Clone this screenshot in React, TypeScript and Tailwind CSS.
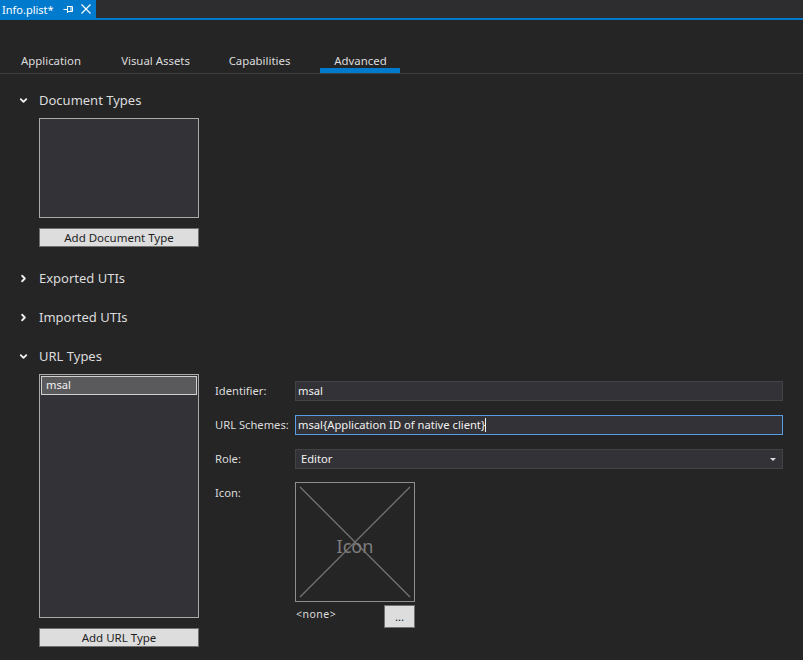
import { ChevronDown, ChevronRight } from 'lucide-react';

const font = "font-['Noto_Sans','Open_Sans',sans-serif]";

function SectionHeader({ title, open, className }: { title: string; open?: boolean; className?: string }) {
  return (
    <div className={`flex h-5 items-center ${className ?? ''}`}>
      <div className="flex w-[39px] justify-center pl-[7px] text-[#f1f1f1]">
        {open ? <ChevronDown size={11} strokeWidth={4} /> : <ChevronRight size={11} strokeWidth={4} />}
      </div>
      <span className="pt-[2px] text-[13px] text-[#dcdcdc]">{title}</span>
    </div>
  );
}

function AddButton({ label, className }: { label: string; className?: string }) {
  return (
    <button className={`flex h-[19px] w-40 items-center justify-center border border-[#707070] bg-[#dddddd] text-[11.5px] text-[#1e1e1e] ${className ?? ''}`}>
      {label}
    </button>
  );
}

function Field({ label, children, className }: { label: string; children: React.ReactNode; className?: string }) {
  return (
    <div className={`flex items-center ${className ?? ''}`}>
      <div className="w-20 text-[11.2px] text-[#dcdcdc]">{label}</div>
      {children}
    </div>
  );
}

const tabs = ['Application', 'Visual Assets', 'Capabilities', 'Advanced'];

export default function App() {
  return (
    <div className={`h-[660px] w-[803px] overflow-hidden bg-[#252526] ${font}`}>
      {/* document tab strip */}
      <div className="flex h-[18px] bg-[#2d2d30]">
        <div className="flex w-24 items-center bg-[#007acc] pl-[2px] text-white">
          <span className="w-[51px] text-[11px] leading-none">Info.plist*</span>
          <svg width="11" height="9" viewBox="0 0 11 9" className="ml-[10px]" fill="none" stroke="white">
            <path d="M0.5 4.5H4M4.5 1V8M4.5 1.5H9.5V6.5H4.5M8 1.5V6.5" />
          </svg>
          <svg width="10" height="10" viewBox="0 0 10 10" className="ml-[7px]" fill="none" stroke="white" strokeWidth="1.2">
            <path d="M0.5 0.5L9.5 9.5M9.5 0.5L0.5 9.5" />
          </svg>
        </div>
      </div>
      <div className="h-[2px] bg-[#007acc]" />

      {/* page tabs */}
      <div className="mt-[29px] flex h-[25px] border-b border-[#3f3f41] text-[11.4px] text-[#dcdcdc]">
        <div className="flex w-[102px] justify-center pt-[3px]">{tabs[0]}</div>
        <div className="flex w-[107px] justify-center pt-[3px]">{tabs[1]}</div>
        <div className="flex w-[111px] justify-center pt-[3px] pr-[10px]">{tabs[2]}</div>
        <div className="flex h-6 w-20 justify-center border-b-[5px] border-[#007acc] pt-[3px] pl-px">{tabs[3]}</div>
      </div>

      <SectionHeader title="Document Types" open className="mt-4" />
      <div className="mt-2 ml-[39px] h-[100px] w-40 border border-[#a9a9a9] bg-[#333337]" />
      <AddButton label="Add Document Type" className="mt-[10px] ml-[39px]" />

      <SectionHeader title="Exported UTIs" className="mt-[21px]" />
      <SectionHeader title="Imported UTIs" className="mt-[19px]" />
      <SectionHeader title="URL Types" open className="mt-[19px]" />

      <div className="mt-2 ml-[39px] flex">
        <div>
          <div className="h-[244px] w-40 border border-[#a9a9a9] bg-[#333337] p-px">
            <div className="flex h-[19px] items-center border border-[#d0d0d0] bg-[#5a5a5c] pl-1 text-[11.2px] text-[#f1f1f1]">msal</div>
          </div>
          <AddButton label="Add URL Type" className="mt-[10px]" />
        </div>

        <div className="ml-4 pt-[7px]">
          <Field label="Identifier:">
            <div className="flex h-5 w-[488px] items-center border border-[#434346] bg-[#333337] pl-[2px] text-[11.2px] text-[#f1f1f1]">msal</div>
          </Field>
          <Field label="URL Schemes:" className="mt-[14px]">
            <div className="flex h-5 w-[488px] items-center border border-[#569de5] bg-[#333337] pl-[2px] text-[11.2px] text-[#f1f1f1]">
              msal{'{'}Application ID of native client{'}'}
              <span className="h-[14px] w-px bg-[#f1f1f1]" />
            </div>
          </Field>
          <Field label="Role:" className="mt-[14px]">
            <div className="flex h-5 w-[488px] items-center justify-between border border-[#434346] bg-[#333337] pr-[6px] pl-[5px] text-[11.2px] text-[#f1f1f1]">
              Editor
              <span className="h-0 w-0 border-x-[3px] border-t-[3px] border-x-transparent border-t-[#dcdcdc]" />
            </div>
          </Field>
          <div className="mt-[13px] flex">
            <div className="w-20 pt-[3px] text-[11.2px] text-[#dcdcdc]">Icon:</div>
            <div>
              <div className="relative flex h-[120px] w-[120px] items-center justify-center border border-[#8e8e8e]">
                <svg className="absolute inset-0" width="118" height="118" viewBox="0 0 118 118" stroke="#757575" strokeWidth="1.3" fill="none">
                  <path d="M4 4L114 114M114 4L4 114" />
                </svg>
                <span className="relative pt-[9px] text-[18px] text-[#7d7d7d]">Icon</span>
              </div>
              <div className="mt-[3px] flex justify-between">
                <span className="pt-[2px] pl-px text-[10.5px] tracking-[0.5px] text-[#dcdcdc]">{'<none>'}</span>
                <button className="flex h-[23px] w-[31px] items-center justify-center border border-[#707070] bg-[#dddddd] pt-px text-[11.5px] text-[#1e1e1e]">...</button>
              </div>
            </div>
          </div>
        </div>
      </div>
    </div>
  );
}
